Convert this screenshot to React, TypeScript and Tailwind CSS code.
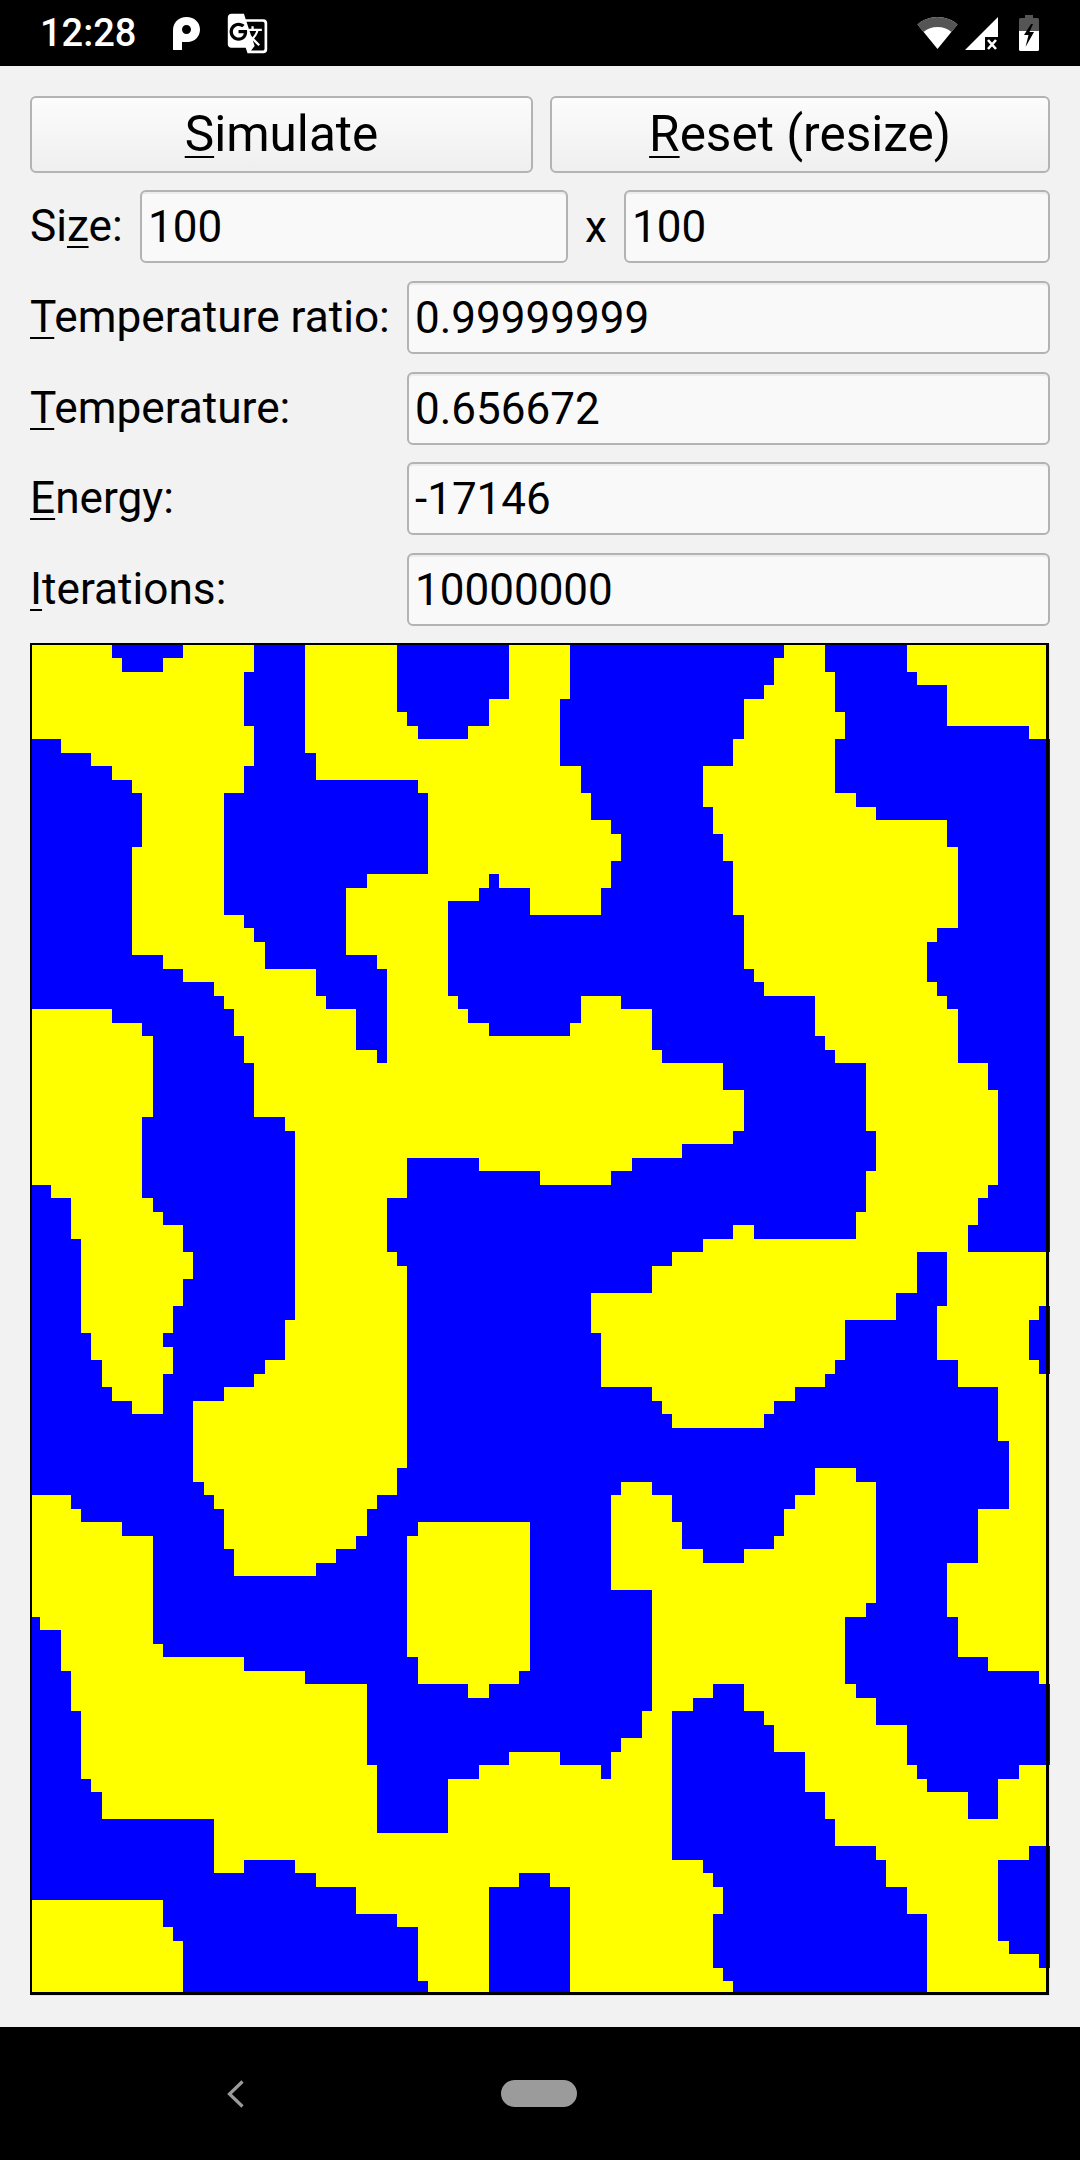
import React from 'react';
import { MdGTranslate } from 'react-icons/md';

// Outlines of the blue areas, traced per region of the screen.
// Units are those of a 2.904x (y: sy) view of the region; snapped to the 100x100 grid below.
const REGIONS: { ox: number; oy: number; sy: number; paths: string[] }[] = [
  {
    ox: 0,
    oy: 640,
    sy: 3,
    paths: [
      'M325 14H531V52H473V93H354V52H325Z',
      'M740 14H889V336H918V417H1214V456H1243V699H1066V741H1008V945H1095V984H1124V1269H1095V1227H1037V1107H947V1065H918V984H769V903H740V864H709V822H650V456H709V375H740V255H709V93H740Z',
      'M1156 14H1481V174H1420V255H1362V294H1214V255H1185V213H1156Z',
      'M92 294H177V336H264V375H325V417H383V456H412V618H383V945H473V984H531V1026H621V1065H650V1107H679V1188H709V1269H740V1431H828V1473H859V1500H412V1431H444V1188H412V1146H325V1107H92Z',
      'M1420 699H1452V741H1539V822H1568V1188H1420V1146H1362V1107H1333V1065H1304V783H1391V741H1420Z',
    ],
  },
  {
    ox: 540,
    oy: 640,
    sy: 3,
    paths: [
      'M90 14H711V52H682V132H653V174H592V294H563V375H476V498H505V579H534V660H563V822H592V984H624V1026H653V1065H801V1188H830V1227H859V1269H950V1473H979V1500H563V1473H592V1350H534V1269H357V1227H328V1107H238V1065H119V1146H90V1188H0V822H180V741H209V660H238V579H209V537H148V456H119V375H61V174H90Z',
      'M830 14H1069V93H1098V132H1185V255H1423V294H1481V1500H1333V1350H1304V1269H1217V1107H1185V1065H1156V1026H1127V903H1156V864H1217V618H1185V537H979V498H920V456H859V294H889V213H859V93H830Z',
    ],
  },
  {
    ox: 0,
    oy: 1130,
    sy: 3,
    paths: [
      'M92 165H148V204H206V327H235V609H264V693H296V774H325V813H383V855H473V732H502V651H473V609H502V528H531V447H560V366H531V285H473V246H444V204H412V0H859V570H828V693H769V732H740V774H650V813H560V1056H592V1098H621V1137H650V1260H679V1341H918V1299H976V1260H1037V1218H1066V1137H1095V1098H1156V1017H1185V408H1156V366H1124V204H1185V84H1391V123H1568V1179H1214V1218H1185V1500H444V1218H354V1179H235V1137H206V1098H92Z',
      'M1539 1179H1568V1500H1539Z',
      'M92 1464H116V1500H92Z',
    ],
  },
  {
    ox: 540,
    oy: 1130,
    sy: 3,
    paths: [
      'M563 0H979V123H950V246H920V327H624V285H563V327H476V366H386V408H328V489H148V609H180V774H328V813H357V855H386V894H653V855H682V813H740V774H830V732H859V693H889V570H1037V489H1098V366H1185V528H1156V693H1217V774H1333V936H1365V1137H1275V1299H1185V1464H1217V1500H889V1464H950V1422H979V1056H920V1017H801V1098H740V1137H711V1218H682V1260H592V1299H476V1260H415V1179H386V1098H328V1056H238V1098H209V1383H328V1500H0V165H209V123H267V84H415V42H563Z',
      'M1333 0H1481V366H1246V285H1275V204H1304V165H1333Z',
      'M1452 528H1481V732H1452V693H1423V570H1452Z',
    ],
  },
  {
    ox: 0,
    oy: 1620,
    sy: 2.904,
    paths: [
      'M92 0H116V32H177V151H206V267H235V465H264V502H296V584H621V740H709V700H859V740H918V778H1037V857H1156V897H1214V1054H1243V1090H531V935H502V897H473V819H92Z',
      'M444 0H1185V110H1214V189H1362V229H1420V189H1510V151H1539V0H1568V386H1481V424H1391V465H1304V621H1095V424H1066V189H889V151H709V110H473V72H444Z',
      'M1420 778H1510V740H1568V1090H1420Z',
    ],
  },
  {
    ox: 540,
    oy: 1620,
    sy: 2.904,
    paths: [
      'M0 0H328V267H296V346H238V386H209V465H180V424H61V386H0Z',
      'M505 189H592V267H653V308H682V386H772V502H830V584H859V662H979V700H1008V778H1069V857H1127V1090H563V1054H534V1013H505V857H534V778H505V740H476V700H386V267H444V229H505Z',
      'M0 740H32V778H90V1090H0Z',
      'M889 0H1217V110H1304V151H1452V189H1481V424H1394V465H1333V584H1246V502H1127V465H1098V424H1069V308H979V229H920V189H889Z',
      'M1423 662H1481V1013H1452V976H1365V935H1333V700H1423Z',
    ],
  },
];

const snapX = (ox: number, v: number) => {
  const col = Math.round((ox + v / 2.904 - 31.7) / 10.18);
  return col >= 100 ? 1020 : Math.floor(0.8 + col * 10.19);
};

const snapY = (oy: number, sy: number, v: number) => {
  const row = Math.round((oy + v / sy - 644.7) / 13.5);
  return Math.round(1.7 + row * 13.5);
};

const toGrid = (d: string, ox: number, oy: number, sy: number) =>
  d.replace(/M(\d+) (\d+)|H(\d+)|V(\d+)/g, (_m, mx, my, h, v) => {
    if (mx !== undefined) return `M${snapX(ox, +mx)} ${snapY(oy, sy, +my)}`;
    if (h !== undefined) return `H${snapX(ox, +h)}`;
    return `V${snapY(oy, sy, +v)}`;
  });

const Lattice: React.FC = () => (
  <svg width="1021" height="1353" viewBox="0 0 1021 1353" shapeRendering="crispEdges" className="block mt-[17px]">
    <rect x="1" y="1" width="1019" height="1352" fill="#ffff00" />
    {REGIONS.map((r) =>
      r.paths.map((d, i) => <path key={`${r.ox}-${r.oy}-${i}`} d={toGrid(d, r.ox, r.oy, r.sy)} fill="#0000ff" />)
    )}
    <rect x="0" y="0" width="1019" height="2" fill="#000" />
    <rect x="0" y="0" width="2" height="1352" fill="#000" />
    <rect x="1016" y="0" width="3" height="1352" fill="#000" />
    <rect x="0" y="1349" width="1019" height="3" fill="#000" />
  </svg>
);

const Mn: React.FC<{ children: React.ReactNode }> = ({ children }) => (
  <span className="underline decoration-2 underline-offset-[5px] [text-decoration-skip-ink:none]">{children}</span>
);

const Field: React.FC<{ value: string; className?: string }> = ({ value, className = '' }) => (
  <input
    readOnly
    value={value}
    className={`h-[73px] min-w-0 rounded-[6px] border-2 border-[#b3b3b3] bg-[#f9f9f9] px-[6px] text-[44px] text-black shadow-[inset_0_2px_0_#ececec] outline-none ${className}`}
  />
);

const Row: React.FC<{ label: React.ReactNode; value: string; className?: string }> = ({ label, value, className = '' }) => (
  <div className={`flex items-center ${className}`}>
    <div className="w-[377px] shrink-0 text-[44.2px] leading-none">{label}</div>
    <Field value={value} className="flex-1" />
  </div>
);

const ButtonBox: React.FC<{ className?: string; children: React.ReactNode }> = ({ className = '', children }) => (
  <button className={`h-[77px] rounded-[6px] border-2 border-[#b3b3b3] bg-gradient-to-b from-[#fcfcfc] to-[#efefef] text-[49.5px] leading-none text-black ${className}`}>
    {children}
  </button>
);

const StatusIcons: React.FC = () => (
  <div className="flex items-center">
    {/* wifi */}
    <svg width="41" height="32" viewBox="0 0 41 32">
      <path d="M0.5 7.5C6 2.8 13 0 20.5 0S35 2.8 40.5 7.5L20.5 32Z" fill="#fff" />
      <path d="M0.5 7.5C6 2.8 13 0 20.5 0S35 2.8 40.5 7.5L34.5 15C30.5 11.8 25.800 10 20.500 10S10.500 11.800 6.500 15Z" fill="#555" />
    </svg>
    {/* cell signal, no data */}
    <svg width="33" height="33" viewBox="0 0 33 33" className="ml-[7px]">
      <path d="M33 0V20H20V33H0Z" fill="#fff" />
      <path d="M23 23L31 32M31 23L23 32" stroke="#fff" strokeWidth="2.600" />
    </svg>
    {/* battery, charging */}
    <svg width="20" height="36" viewBox="0 0 20 36" className="ml-[21px]">
      <path d="M6 0H14V3H18.500Q20 3 20 4.500V16H0V4.500Q0 3 1.500 3H6Z" fill="#555" />
      <path d="M0 16H20V34.500Q20 36 18.500 36H1.500Q0 36 0 34.500Z" fill="#fff" />
      <path d="M12 9L5 20H9.500L6.500 32L15 17H10.500L14 9Z" fill="#000" />
    </svg>
  </div>
);

export default function App() {
  return (
    <div className="flex h-[2160px] w-[1080px] flex-col bg-black font-[Roboto,sans-serif] text-black">
      <header className="flex h-[66px] shrink-0 items-center bg-black pl-[40px] pr-[41px] text-white">
        <span className="w-[133px] text-[38px] font-medium leading-none">12:28</span>
        <svg width="27" height="33" viewBox="0 0 27 33">
          <path
            fillRule="evenodd"
            d="M0 13.500C0 5.500 5.500 0 13.500 0S27 5.500 27 12.500 21.500 25 14.500 25H9V33H0ZM9 12.500C9 15 11 17 13.500 17S18 15 18 12.500 16 8 13.500 8 9 10 9 12.500Z"
            fill="#fff"
          />
        </svg>
        <MdGTranslate className="ml-[26px] text-white" size={43} />
        <div className="ml-auto">
          <StatusIcons />
        </div>
      </header>

      <main className="flex-1 bg-[#f2f2f2] pl-[30px] pr-[30px] pt-[30px]">
        <div className="flex gap-[17px]">
          <ButtonBox className="w-[503px]">
            <Mn>S</Mn>imulate
          </ButtonBox>
          <ButtonBox className="flex-1">
            <Mn>R</Mn>eset (resize)
          </ButtonBox>
        </div>

        <div className="mt-[17px] flex items-center">
          <div className="w-[110px] shrink-0 text-[44.2px] leading-none">
            Si<Mn>z</Mn>e:
          </div>
          <Field value="100" className="w-[428px]" />
          <span className="w-[56px] text-center text-[44px] leading-none">x</span>
          <Field value="100" className="flex-1" />
        </div>

        <Row className="mt-[18px]" label={<><Mn>T</Mn>emperature ratio:</>} value="0.99999999" />
        <Row className="mt-[18px]" label={<><Mn>T</Mn>emperature:</>} value="0.656672" />
        <Row className="mt-[17px]" label={<><Mn>E</Mn>nergy:</>} value="-17146" />
        <Row className="mt-[18px]" label={<><Mn>I</Mn>terations:</>} value="10000000" />

        <Lattice />
      </main>

      <nav className="flex h-[133px] shrink-0 items-center bg-black pl-[227px]">
        <svg width="17" height="28" viewBox="0 0 17 28" fill="none">
          <path d="M15.500 1.500L2.500 14L15.500 26.500" stroke="#9b9b9b" strokeWidth="3.200" />
        </svg>
        <div className="ml-[257px] h-[27px] w-[76px] rounded-full bg-[#9b9b9b]" />
      </nav>
    </div>
  );
}
